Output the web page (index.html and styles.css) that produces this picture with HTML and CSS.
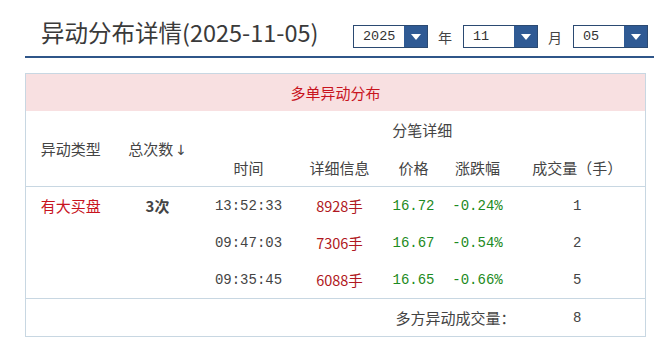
FILE: index.html
```html
<!DOCTYPE html>
<html lang="zh">
<head>
<meta charset="utf-8">
<title>异动分布详情</title>
<link rel="stylesheet" href="styles.css">
</head>
<body>
<div class="page">
  <div class="topbar">
    <h1 class="title">异动分布详情(2025-11-05)</h1>
    <div class="pickers">
      <div class="sel"><span class="sel-val">2025</span><span class="sel-btn"><i class="tri"></i></span></div>
      <span class="unit">年</span>
      <div class="sel"><span class="sel-val">11</span><span class="sel-btn"><i class="tri"></i></span></div>
      <span class="unit">月</span>
      <div class="sel"><span class="sel-val">05</span><span class="sel-btn"><i class="tri"></i></span></div>
    </div>
  </div>

  <table class="grid">
    <colgroup>
      <col class="c1"><col class="c2"><col class="c3"><col class="c4"><col class="c5"><col class="c6"><col class="c7">
    </colgroup>
    <thead>
      <tr class="caption-row"><th colspan="7" class="caption">多单异动分布</th></tr>
      <tr class="hrow">
        <th rowspan="2">异动类型</th>
        <th rowspan="2">总次数<span class="arrow">↓</span></th>
        <th colspan="5">分笔详细</th>
      </tr>
      <tr class="hrow hrow2">
        <th>时间</th><th>详细信息</th><th>价格</th><th>涨跌幅</th><th>成交量（手）</th>
      </tr>
    </thead>
    <tbody class="data">
      <tr>
        <td class="type">有大买盘</td><td class="count">3次</td>
        <td class="mono">13:52:33</td><td class="lots">8928手</td><td class="mono green">16.72</td><td class="mono green">-0.24%</td><td class="mono">1</td>
      </tr>
      <tr>
        <td></td><td></td>
        <td class="mono">09:47:03</td><td class="lots">7306手</td><td class="mono green">16.67</td><td class="mono green">-0.54%</td><td class="mono">2</td>
      </tr>
      <tr>
        <td></td><td></td>
        <td class="mono">09:35:45</td><td class="lots">6088手</td><td class="mono green">16.65</td><td class="mono green">-0.66%</td><td class="mono">5</td>
      </tr>
    </tbody>
    <tbody class="foot">
      <tr>
        <td colspan="4"></td><td colspan="2" class="sum-label">多方异动成交量：</td><td class="mono">8</td>
      </tr>
    </tbody>
  </table>
</div>
</body>
</html>
```

FILE: styles.css
```css
html, body {
  margin: 0;
  padding: 0;
  background: #ffffff;
}

body {
  font-family: "Noto Sans CJK SC", "Noto Sans", sans-serif;
  color: #444;
}

.page {
  padding-left: 25px;
}

.topbar {
  display: flex;
  justify-content: space-between;
  align-items: flex-start;
  height: 56px;
  border-bottom: 2px solid #2f5689;
}

.title {
  margin: 18px 0 0 16px;
  font-size: 23.5px;
  line-height: 28px;
  font-weight: normal;
  color: #3a3a3a;
}

.pickers {
  display: flex;
  align-items: center;
  margin-top: 25px;
  margin-right: 6px;
}

.sel {
  display: flex;
  width: 75px;
  height: 23px;
  box-sizing: border-box;
  border: 1px solid #2b4a72;
  background: #fff;
}

.sel-val {
  flex: 1;
  padding-left: 9px;
  font-family: "Liberation Mono", "DejaVu Sans Mono", monospace;
  font-size: 13.5px;
  line-height: 21px;
  color: #333;
}

.sel-btn {
  width: 23px;
  background: #2f5a94;
  display: flex;
  align-items: center;
  justify-content: center;
}

.tri {
  display: block;
  width: 0;
  height: 0;
  border-left: 5px solid transparent;
  border-right: 5px solid transparent;
  border-top: 6px solid #ffffff;
}

.unit {
  font-size: 14px;
  color: #444;
  margin: 0 11px 0 10px;
}

.grid {
  margin-top: 15px;
  width: 620px;
  table-layout: fixed;
  border-collapse: collapse;
  border: 1px solid #c8d7e2;
  font-size: 15px;
}

.c1 { width: 90px; }
.c2 { width: 84px; }
.c3 { width: 98px; }
.c4 { width: 84px; }
.c5 { width: 64px; }
.c6 { width: 64px; }
.c7 { width: 136px; }

.grid th,
.grid td {
  padding: 0;
  text-align: center;
  vertical-align: middle;
  font-weight: normal;
  white-space: nowrap;
}

.caption-row th {
  height: 37px;
  background: #f8e0e1;
  color: #c8141e;
  font-size: 15px;
}

.hrow th {
  height: 37px;
  color: #444;
}

.hrow2 th {
  height: 38px;
}

.arrow {
  font-family: "DejaVu Sans", sans-serif;
  font-size: 14px;
  margin-left: 2px;
}

thead {
  border-bottom: 1px solid #c8d7e2;
}

.data {
  border-bottom: 1px solid #c8d7e2;
}

.data td {
  height: 37px;
}

.foot td {
  height: 37px;
}

.type {
  color: #c8141e;
}

.grid td.count {
  font-weight: bold;
  color: #444;
}

.mono {
  font-family: "Liberation Mono", "DejaVu Sans Mono", monospace;
  font-size: 14px;
  color: #444;
}

.lots {
  color: #b01822;
  font-size: 14.5px;
}

.green {
  color: #1d8a22;
}

.grid td.sum-label {
  color: #444;
  padding-left: 14px;
}
```
